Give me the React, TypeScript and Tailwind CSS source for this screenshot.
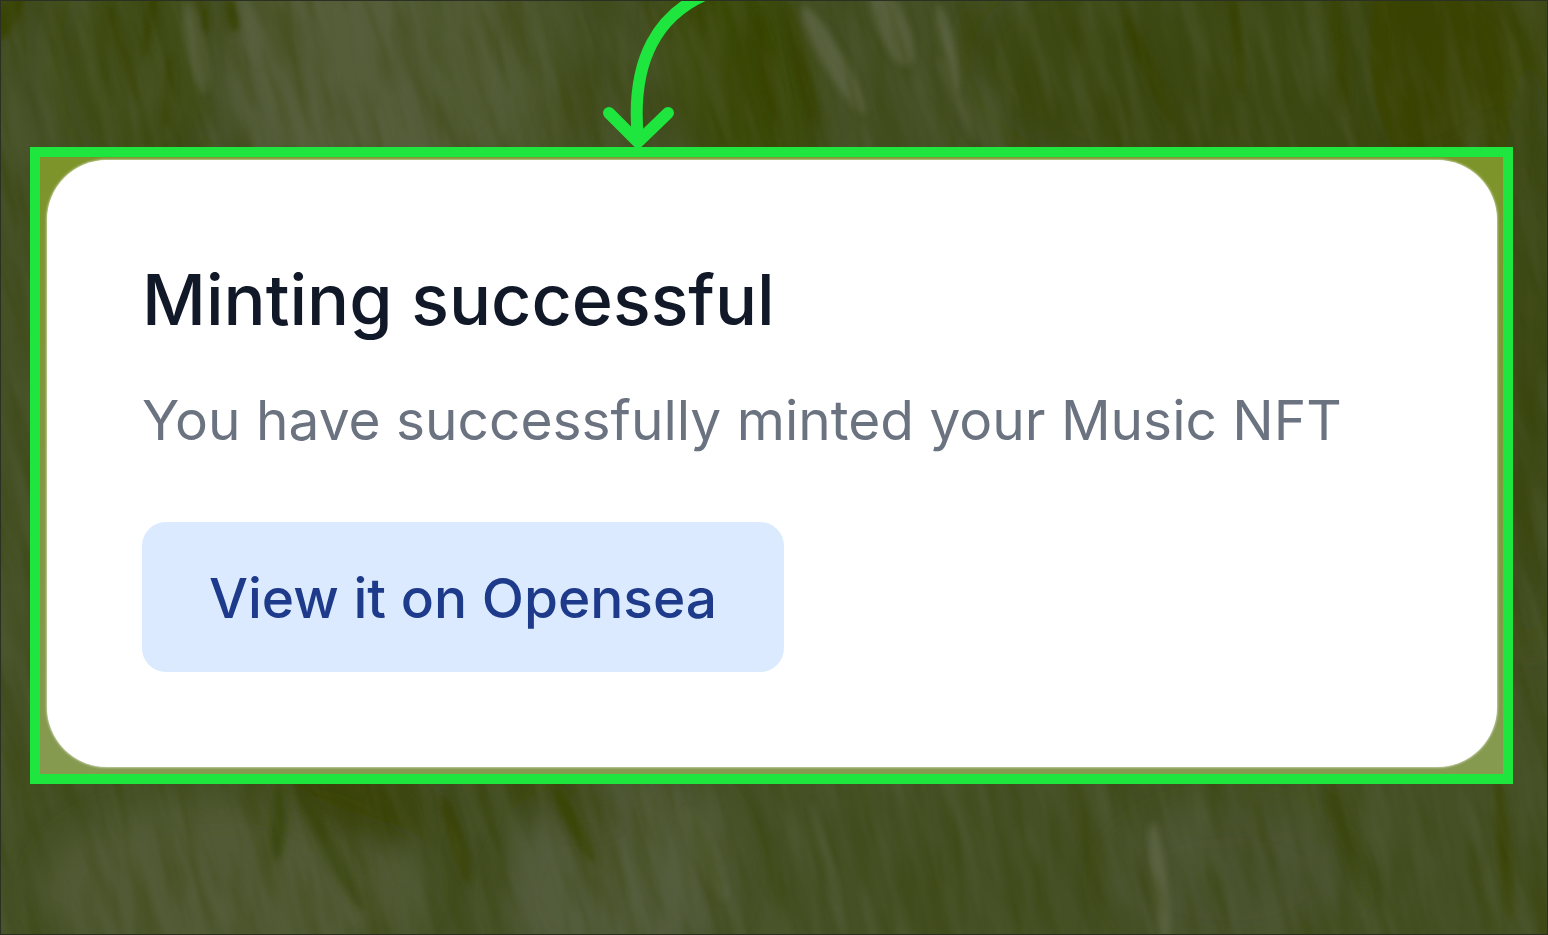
import React from "react";

type Blob = { x: number; y: number; rx: number; ry: number; angle: number; fill: string; opacity: number };

const blobs: Blob[] = [
  { x: 370, y: 60, rx: 150, ry: 150, angle: -20, fill: "#59603f", opacity: 0.8 },
  { x: 500, y: 70, rx: 70, ry: 120, angle: -20, fill: "#4f5930", opacity: 0.7 },
  { x: 230, y: 890, rx: 190, ry: 90, angle: 0, fill: "#545c38", opacity: 0.8 },
  { x: 620, y: 880, rx: 120, ry: 100, angle: -25, fill: "#565e3e", opacity: 0.85 },
  { x: 1230, y: 880, rx: 120, ry: 70, angle: 0, fill: "#4c5632", opacity: 0.7 },
  { x: 140, y: 60, rx: 80, ry: 120, angle: 0, fill: "#3e4b16", opacity: 0.7 },
  { x: 740, y: 70, rx: 70, ry: 120, angle: -18, fill: "#3a4708", opacity: 0.8 },
  { x: 1250, y: 60, rx: 280, ry: 130, angle: 0, fill: "#3c490f", opacity: 0.8 },
  { x: 1460, y: 60, rx: 90, ry: 140, angle: -5, fill: "#384200", opacity: 0.55 },
  { x: 1530, y: 350, rx: 30, ry: 300, angle: 0, fill: "#3c480e", opacity: 0.8 },
  { x: 350, y: 800, rx: 80, ry: 40, angle: 20, fill: "#374000", opacity: 0.7 },
  { x: 560, y: 795, rx: 60, ry: 25, angle: 20, fill: "#374000", opacity: 0.6 },
];

const blades: Blob[] = [
  { x: 196, y: 45, rx: 9, ry: 48, angle: -10, fill: "#5b6340", opacity: 0.8 },
  { x: 250, y: 30, rx: 5, ry: 36, angle: -12, fill: "#5b6340", opacity: 0.6 },
  { x: 834, y: 60, rx: 11, ry: 62, angle: -30, fill: "#5e6644", opacity: 0.8 },
  { x: 892, y: 25, rx: 15, ry: 44, angle: -22, fill: "#5e6644", opacity: 0.8 },
  { x: 948, y: 48, rx: 7, ry: 46, angle: -12, fill: "#5e6644", opacity: 0.8 },
  { x: 958, y: 100, rx: 5, ry: 48, angle: -25, fill: "#5b6340", opacity: 0.7 },
  { x: 1160, y: 885, rx: 8, ry: 62, angle: -7, fill: "#5e6644", opacity: 0.8 },
  { x: 706, y: 855, rx: 10, ry: 50, angle: -22, fill: "#59613f", opacity: 0.8 },
  { x: 828, y: 870, rx: 5, ry: 70, angle: -14, fill: "#59613f", opacity: 0.6 },
  { x: 8, y: 14, rx: 10, ry: 28, angle: 25, fill: "#384200", opacity: 0.9 },
  { x: 122, y: 52, rx: 6, ry: 50, angle: -17, fill: "#384200", opacity: 0.8 },
  { x: 148, y: 25, rx: 6, ry: 34, angle: 10, fill: "#384200", opacity: 0.8 },
  { x: 166, y: 92, rx: 6, ry: 36, angle: 4, fill: "#384200", opacity: 0.8 },
  { x: 203, y: 20, rx: 4, ry: 14, angle: 0, fill: "#384200", opacity: 0.9 },
  { x: 232, y: 14, rx: 6, ry: 18, angle: -10, fill: "#384200", opacity: 0.8 },
  { x: 768, y: 70, rx: 8, ry: 60, angle: -10, fill: "#384200", opacity: 0.8 },
  { x: 800, y: 60, rx: 8, ry: 60, angle: -12, fill: "#384200", opacity: 0.8 },
  { x: 1150, y: 70, rx: 7, ry: 60, angle: -24, fill: "#384200", opacity: 0.8 },
  { x: 1238, y: 45, rx: 7, ry: 50, angle: -5, fill: "#384200", opacity: 0.7 },
  { x: 1340, y: 50, rx: 7, ry: 60, angle: -6, fill: "#384200", opacity: 0.7 },
  { x: 278, y: 822, rx: 8, ry: 40, angle: 4, fill: "#3c4910", opacity: 0.9 },
  { x: 330, y: 850, rx: 8, ry: 70, angle: -28, fill: "#3c4910", opacity: 0.8 },
  { x: 455, y: 840, rx: 7, ry: 46, angle: -16, fill: "#374000", opacity: 0.9 },
  { x: 574, y: 825, rx: 7, ry: 44, angle: -28, fill: "#3a4604", opacity: 0.8 },
  { x: 1350, y: 850, rx: 7, ry: 60, angle: -18, fill: "#3c4910", opacity: 0.8 },
  { x: 1505, y: 850, rx: 7, ry: 70, angle: -5, fill: "#384200", opacity: 0.8 },
];

function Strokes({ items }: { items: Blob[] }) {
  return (
    <>
      {items.map((b, i) => (
        <ellipse
          key={i}
          cx={b.x}
          cy={b.y}
          rx={b.rx}
          ry={b.ry}
          fill={b.fill}
          opacity={b.opacity}
          transform={`rotate(${b.angle} ${b.x} ${b.y})`}
        />
      ))}
    </>
  );
}

function GrassBackdrop() {
  return (
    <svg
      className="absolute inset-0 h-full w-full"
      viewBox="0 0 1548 935"
      preserveAspectRatio="xMidYMid slice"
      aria-hidden="true"
    >
      <defs>
        <filter id="soften" x="-50%" y="-50%" width="200%" height="200%">
          <feGaussianBlur stdDeviation="16" />
        </filter>
        <filter id="softenBlades" x="-20%" y="-20%" width="140%" height="140%">
          <feGaussianBlur stdDeviation="3" />
        </filter>
        <filter id="lightBlades" x="0" y="0" width="100%" height="100%" colorInterpolationFilters="sRGB">
          <feTurbulence type="fractalNoise" baseFrequency="0.05 0.008" numOctaves="3" seed="8" />
          <feColorMatrix values="0 0 0 0 0.36  0 0 0 0 0.4  0 0 0 0 0.27  2.6 0 0 0 -1.1" />
          <feGaussianBlur stdDeviation="1" />
        </filter>
        <filter id="darkBlades" x="0" y="0" width="100%" height="100%" colorInterpolationFilters="sRGB">
          <feTurbulence type="fractalNoise" baseFrequency="0.045 0.008" numOctaves="3" seed="21" />
          <feColorMatrix values="0 0 0 0 0.21  0 0 0 0 0.25  0 0 0 0 0  2.8 0 0 0 -1.2" />
          <feGaussianBlur stdDeviation="1" />
        </filter>
      </defs>
      <rect width="1548" height="935" fill="#455024" />
      <g filter="url(#soften)">
        <Strokes items={blobs} />
      </g>
      <g filter="url(#softenBlades)">
        <Strokes items={blades} />
      </g>
      <g transform="rotate(-14 774 467)">
        <rect x="-200" y="-300" width="1950" height="1550" filter="url(#darkBlades)" opacity="0.38" />
        <rect x="-200" y="-300" width="1950" height="1550" filter="url(#lightBlades)" opacity="0.3" />
      </g>
    </svg>
  );
}

function Arrow() {
  return (
    <svg
      className="absolute -top-px left-[598px] h-[150px] w-[120px]"
      viewBox="0 0 120 150"
      fill="none"
      stroke="#1fe53f"
      strokeWidth="12"
      strokeLinecap="round"
      strokeLinejoin="round"
      aria-hidden="true"
    >
      <path d="M110 -7C60 13 31 59 39 139" />
      <path d="M10 113L39 142L69 113" />
    </svg>
  );
}

export default function App() {
  return (
    <main className="relative isolate min-h-screen overflow-hidden border border-[#2b3122] bg-[#455024] pt-[146px] pr-[34px] pb-[150px] pl-[29px] font-['Inter',sans-serif]">
      <GrassBackdrop />
      <Arrow />
      <div className="relative border-10 border-[#1fe53f] bg-linear-to-b from-[#7d942a] to-[#869a50] pt-[3px] pr-[6px] pb-[7px] pl-[7px]">
        <section
          aria-labelledby="dialog-title"
          className="rounded-[60px] bg-white px-[95px] pt-[92px] pb-[95px] shadow-[0_0_3px_#ffffff]"
        >
          <h1 id="dialog-title" className="text-[70px] leading-[96px] font-medium text-[#111827]">
            Minting successful
          </h1>
          <p className="mt-8 text-[55px] leading-[80px] text-[#6b7280]">
            You have successfully minted your Music NFT
          </p>
          <button
            type="button"
            className="mt-[62px] rounded-[24px] bg-[#dbeafe] px-[67px] pt-[36px] pb-[34px] text-[55px] leading-[80px] font-medium text-[#1e3a8a]"
          >
            View it on Opensea
          </button>
        </section>
      </div>
    </main>
  );
}
